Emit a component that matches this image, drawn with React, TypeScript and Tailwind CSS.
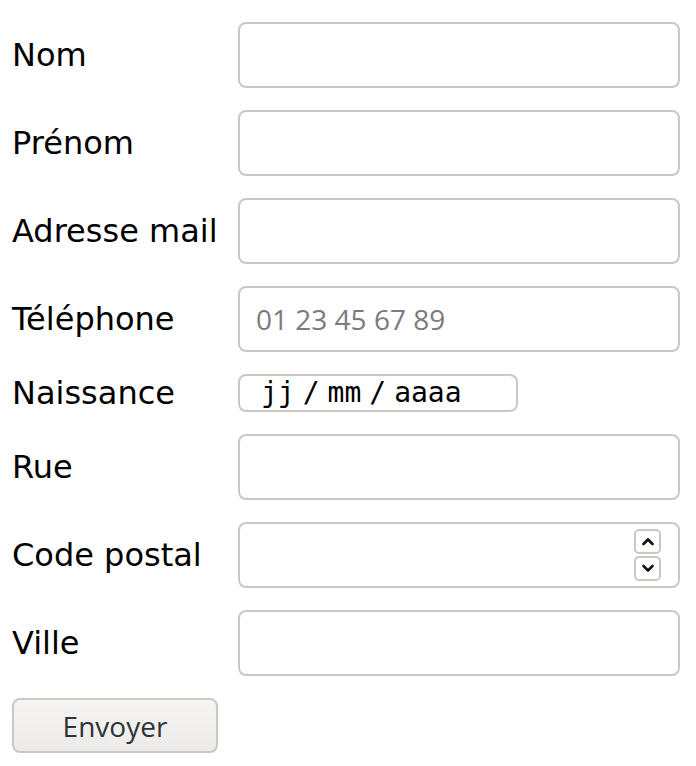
import type { ReactNode } from 'react'

const labelFont = { fontFamily: '"DejaVu Sans", sans-serif' }
const fieldFont = { fontFamily: '"Open Sans", sans-serif' }
const monoFont = { fontFamily: '"DejaVu Sans Mono", monospace' }

const boxClassName = 'rounded-[8px] border-2 border-[#cdc7c2] bg-white'

interface RowProps {
  label: string
  children: ReactNode
}

function Row({ label, children }: RowProps) {
  return (
    <div className="flex items-center">
      <label className="w-[226px] shrink-0 text-[32px] leading-none text-black" style={labelFont}>
        {label}
      </label>
      {children}
    </div>
  )
}

function TextField({ placeholder }: { placeholder?: string }) {
  return (
    <input
      type="text"
      placeholder={placeholder}
      className={`${boxClassName} h-[66px] w-[442px] px-[16px] text-[28px] text-[#2e3436] outline-none placeholder:text-[#7b7b7b]`}
      style={fieldFont}
    />
  )
}

function Chevron({ up }: { up?: boolean }) {
  return (
    <svg width="14" height="9" viewBox="0 0 14 9" fill="none">
      <path
        d={up ? 'M2.5 7 L7 2.5 L11.5 7' : 'M2.5 2 L7 6.5 L11.5 2'}
        stroke="#111"
        strokeWidth="2.6"
        strokeLinecap="round"
        strokeLinejoin="round"
      />
    </svg>
  )
}

export default function App() {
  return (
    <div className="min-h-[766px] w-[696px] bg-white pl-[12px] pt-[22px]">
      <form className="flex flex-col gap-[22px]" onSubmit={(event) => event.preventDefault()}>
        <Row label="Nom">
          <TextField />
        </Row>
        <Row label="Prénom">
          <TextField />
        </Row>
        <Row label="Adresse mail">
          <TextField />
        </Row>
        <Row label="Téléphone">
          <TextField placeholder="01 23 45 67 89" />
        </Row>
        <Row label="Naissance">
          <div
            className={`${boxClassName} flex h-[38px] w-[280px] items-center gap-[8px] pl-[21px] text-[28px] leading-none text-black`}
            style={monoFont}
          >
            <span>jj</span>
            <span>/</span>
            <span>mm</span>
            <span>/</span>
            <span>aaaa</span>
          </div>
        </Row>
        <Row label="Rue">
          <TextField />
        </Row>
        <Row label="Code postal">
          <div className={`${boxClassName} flex h-[66px] w-[442px] items-center pr-[17px]`}>
            <input type="text" className="h-full min-w-0 flex-1 bg-transparent px-[16px] outline-none" />
            <div className="flex flex-col gap-[2px]">
              <span className="flex h-[25px] w-[27px] items-center justify-center rounded-[5px] border-2 border-[#cdc7c2] bg-white">
                <Chevron up />
              </span>
              <span className="flex h-[25px] w-[27px] items-center justify-center rounded-[5px] border-2 border-[#cdc7c2] bg-white">
                <Chevron />
              </span>
            </div>
          </div>
        </Row>
        <Row label="Ville">
          <TextField />
        </Row>
        <div>
          <button
            type="submit"
            className="h-[55px] w-[206px] rounded-[8px] border-2 border-[#cdc7c2] bg-gradient-to-b from-[#f6f5f4] to-[#edebe9] text-[28px] text-[#2e3436]"
            style={fieldFont}
          >
            Envoyer
          </button>
        </div>
      </form>
    </div>
  )
}
